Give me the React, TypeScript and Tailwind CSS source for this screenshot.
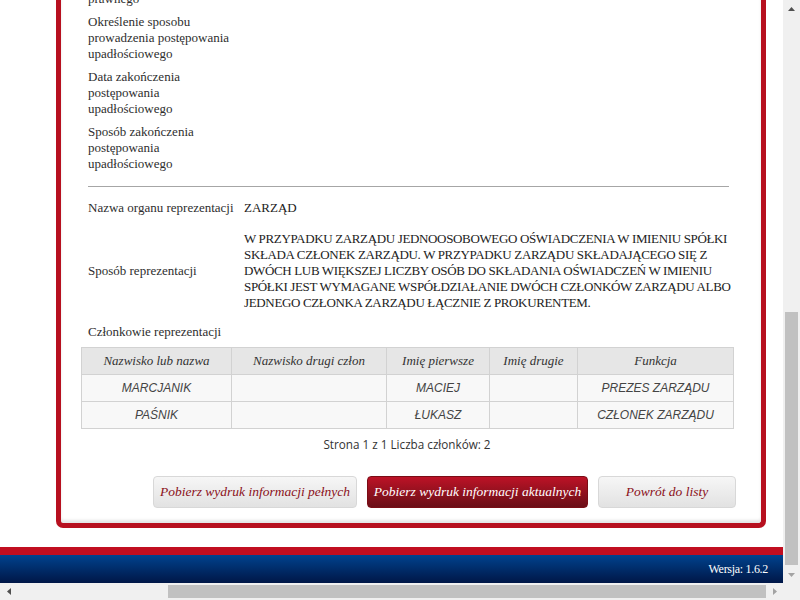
import React from "react";

const serif = "font-['Liberation_Serif',serif]";
const sans = "font-['Liberation_Sans',sans-serif]";

function Label({ children }: { children: React.ReactNode }) {
  return <div className="w-[156px] shrink-0 pr-[6px]">{children}</div>;
}

function UpArrow({ color }: { color: string }) {
  return (
    <svg width="7" height="4" viewBox="0 0 7 4">
      <polygon points="0,4 7,4 3.5,0" fill={color} />
    </svg>
  );
}
function DownArrow({ color }: { color: string }) {
  return (
    <svg width="7" height="4" viewBox="0 0 7 4">
      <polygon points="0,0 7,0 3.5,4" fill={color} />
    </svg>
  );
}
function LeftArrow({ color }: { color: string }) {
  return (
    <svg width="4" height="7" viewBox="0 0 4 7">
      <polygon points="4,0 4,7 0,3.5" fill={color} />
    </svg>
  );
}
function RightArrow({ color }: { color: string }) {
  return (
    <svg width="4" height="7" viewBox="0 0 4 7">
      <polygon points="0,0 0,7 4,3.5" fill={color} />
    </svg>
  );
}

const members = [
  ["MARCJANIK", "", "MACIEJ", "", "PREZES ZARZĄDU"],
  ["PAŚNIK", "", "ŁUKASZ", "", "CZŁONEK ZARZĄDU"],
];

export default function App() {
  return (
    <div className="w-[800px] h-[600px] overflow-hidden bg-white flex flex-col">
      <div className="flex h-[583px]">
        {/* viewport */}
        <div className="w-[783px] h-[583px] overflow-hidden flex flex-col">
          <div className={`h-[547px] overflow-hidden flex flex-col justify-end pb-[19px] ${serif} text-[13px] leading-[16px] text-[#2e2e2e]`}>
            <div className="ml-[56px] w-[710px] shrink-0 bg-white border-x-[5px] border-b-[5px] border-[#b7101f] rounded-b-[7px] shadow-[inset_0_-3px_3px_rgba(0,0,0,0.10)] pl-[20px] pr-[28px] pb-[15px] flex flex-col">
              <div className="flex flex-col gap-[7px] pl-[7px]">
                <div className="flex">
                  <Label>
                    Informacja o utracie
                    <br />
                    bytu prawnego lub
                    <br />
                    zdolności podmiotu
                    <br />
                    prawnego
                  </Label>
                  <div className="flex-1" />
                </div>
                <div className="flex">
                  <Label>Określenie sposobu prowadzenia postępowania upadłościowego</Label>
                  <div className="flex-1" />
                </div>
                <div className="flex">
                  <Label>Data zakończenia postępowania upadłościowego</Label>
                  <div className="flex-1" />
                </div>
                <div className="flex">
                  <Label>Sposób zakończenia postępowania upadłościowego</Label>
                  <div className="flex-1" />
                </div>
              </div>

              <div className="mt-[14px] ml-[7px] mr-[4px] h-px bg-[#a6a6a6]" />

              <div className="mt-[13px] flex pl-[7px]">
                <Label>Nazwa organu reprezentacji</Label>
                <div className="flex-1 text-[#222]">ZARZĄD</div>
              </div>

              <div className="mt-[15px] flex items-center pl-[7px]">
                <Label>Sposób reprezentacji</Label>
                <div className="flex-1 text-[#222] whitespace-nowrap tracking-[-0.35px]">
                  W PRZYPADKU ZARZĄDU JEDNOOSOBOWEGO OŚWIADCZENIA W IMIENIU SPÓŁKI
                  <br />
                  SKŁADA CZŁONEK ZARZĄDU. W PRZYPADKU ZARZĄDU SKŁADAJĄCEGO SIĘ Z
                  <br />
                  DWÓCH LUB WIĘKSZEJ LICZBY OSÓB DO SKŁADANIA OŚWIADCZEŃ W IMIENIU
                  <br />
                  SPÓŁKI JEST WYMAGANE WSPÓŁDZIAŁANIE DWÓCH CZŁONKÓW ZARZĄDU ALBO
                  <br />
                  JEDNEGO CZŁONKA ZARZĄDU ŁĄCZNIE Z PROKURENTEM.
                </div>
              </div>

              <div className="mt-[13px] pl-[7px]">Członkowie reprezentacji</div>

              <table className="mt-[7px] w-[652px] border-collapse table-fixed">
                <colgroup>
                  <col className="w-[150px]" />
                  <col className="w-[155px]" />
                  <col className="w-[103px]" />
                  <col className="w-[88px]" />
                  <col className="w-[156px]" />
                </colgroup>
                <thead>
                  <tr className="h-[27px] bg-[#e6e6e6]">
                    {["Nazwisko lub nazwa", "Nazwisko drugi człon", "Imię pierwsze", "Imię drugie", "Funkcja"].map((h) => (
                      <th key={h} className="border border-[#d2d2d2] font-normal italic text-[13px] text-[#333] p-0 text-center">
                        {h}
                      </th>
                    ))}
                  </tr>
                </thead>
                <tbody>
                  {members.map((r, i) => (
                    <tr key={i} className="h-[27px] bg-[#f8f8f8]">
                      {r.map((c, j) => (
                        <td key={j} className={`border border-[#d2d2d2] p-0 text-center italic ${sans} text-[12px] text-[#444]`}>
                          {c}
                        </td>
                      ))}
                    </tr>
                  ))}
                </tbody>
              </table>

              <div className="mt-[7px] text-center font-['Open_Sans',sans-serif] text-[11.7px] leading-[16px] text-[#333]">
                Strona 1 z 1 Liczba członków: 2
              </div>

              <div className="mt-[24px] flex justify-end gap-[10px] -mr-[3px]">
                <button className="h-[32px] w-[204px] rounded-[4px] border border-[#d8d8d8] bg-gradient-to-b from-[#f6f6f6] to-[#e2e2e2] italic text-[13.5px] text-[#8a1019]">
                  Pobierz wydruk informacji pełnych
                </button>
                <button className="h-[32px] w-[221px] rounded-[4px] border border-[#7a0d16] bg-gradient-to-b from-[#bd1226] to-[#6b0e17] italic text-[13.5px] text-white">
                  Pobierz wydruk informacji aktualnych
                </button>
                <button className="h-[32px] w-[138px] rounded-[4px] border border-[#d8d8d8] bg-gradient-to-b from-[#f6f6f6] to-[#e2e2e2] italic text-[13.5px] text-[#8a1019]">
                  Powrót do listy
                </button>
              </div>
            </div>
          </div>
          {/* footer */}
          <div className="h-[8px] bg-[#c10e20] shrink-0" />
          <div className={`h-[28px] shrink-0 bg-gradient-to-b from-[#00438f] to-[#001747] flex items-center justify-end pr-[15px] ${serif} text-[12px] text-white tracking-[-0.3px]`}>
            Wersja: 1.6.2
          </div>
        </div>
        {/* vertical scrollbar */}
        <div className="w-[17px] h-[583px] bg-[#f0f0f0] flex flex-col">
          <div className="h-[17px] flex items-center justify-center">
            <UpArrow color="#505050" />
          </div>
          <div className="flex-1" />
          <div className="h-[253px] mx-[2px] bg-[#c1c1c1]" />
          <div className="h-[1px]" />
          <div className="h-[17px] flex items-center justify-center">
            <DownArrow color="#a3a3a3" />
          </div>
        </div>
      </div>
      {/* horizontal scrollbar */}
      <div className="h-[17px] flex bg-[#f0f0f0]">
        <div className="w-[17px] flex items-center justify-center">
          <LeftArrow color="#505050" />
        </div>
        <div className="flex-1" />
        <div className="w-[598px] my-[2px] bg-[#c1c1c1]" />
        <div className="w-[17px] flex items-center justify-center">
          <RightArrow color="#a3a3a3" />
        </div>
        <div className="w-[17px] bg-[#f0f0f0]" />
      </div>
    </div>
  );
}
